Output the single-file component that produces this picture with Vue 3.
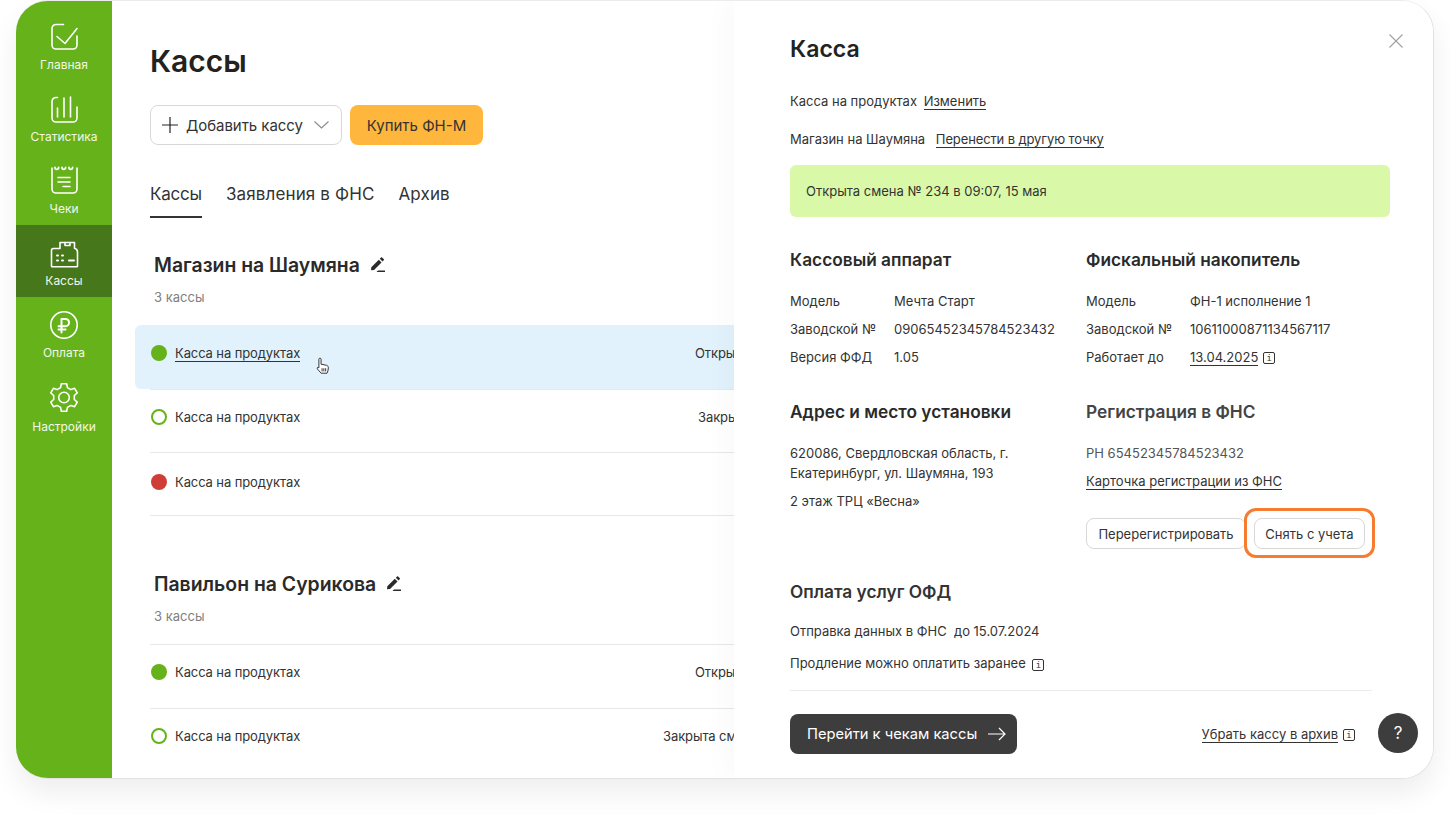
<script setup>
const navItems = [
  { id: 'home', label: 'Главная' },
  { id: 'stats', label: 'Статистика' },
  { id: 'receipts', label: 'Чеки' },
  { id: 'kkt', label: 'Кассы', active: true },
  { id: 'pay', label: 'Оплата' },
  { id: 'settings', label: 'Настройки' },
];

const groups = [
  {
    title: 'Магазин на Шаумяна',
    rows: [
      { state: 'open', status: 'Открыта смена', statusLeft: 560, hover: true },
      { state: 'closed', status: 'Закрыта смена', statusLeft: 548 },
      { state: 'error', status: '', statusLeft: 0 },
    ],
  },
  {
    title: 'Павильон на Сурикова',
    rows: [
      { state: 'open', status: 'Открыта смена', statusLeft: 545 },
      { state: 'closed', status: 'Закрыта смена в 18:00', statusLeft: 513 },
    ],
  },
];

const kkt = [
  ['Модель', 'Мечта Старт'],
  ['Заводской №', '09065452345784523432'],
  ['Версия ФФД', '1.05'],
];
const fn = [
  ['Модель', 'ФН-1 исполнение 1'],
  ['Заводской №', '10611000871134567117'],
];

// six tooth gear outline for the settings item
function gearPath() {
  const pt = (r, deg) => {
    const a = (deg * Math.PI) / 180;
    return (15 + r * Math.cos(a)).toFixed(2) + ' ' + (15.5 + r * Math.sin(a)).toFixed(2);
  };
  let d = '';
  for (let k = 0; k < 6; k++) {
    const c = k * 60 - 90;
    d += (k ? 'L' : 'M') + pt(10.5, c - 19) + 'L' + pt(14, c - 11) + 'L' + pt(14, c + 11) + 'L' + pt(10.5, c + 19);
  }
  return d + 'Z';
}
</script>

<template>
  <div class="page">
    <div class="frame">
      <nav class="sidebar">
        <a v-for="item in navItems" :key="item.id" class="nav-item" :class="{ active: item.active }">
          <svg class="nav-icon" viewBox="0 0 30 30" fill="none" stroke="#fff" stroke-width="1.6" stroke-linecap="round" stroke-linejoin="round">
            <template v-if="item.id === 'home'">
              <path d="M14.500 2.500H7a4 4 0 0 0-4 4V23a4 4 0 0 0 4 4h17a4 4 0 0 0 4-4v-9" />
              <path d="M8 14.500l8 7L28 6.500" />
            </template>
            <template v-else-if="item.id === 'stats'">
              <path d="M8.500 3.500H7a4 4 0 0 0-4 4V24a4 4 0 0 0 4 4h17a4 4 0 0 0 4-4V13" />
              <path d="M8.500 14v9M15 4v19M21.500 3v20" />
            </template>
            <template v-else-if="item.id === 'receipts'">
              <path d="M3 2v21a4 4 0 0 0 4 4h17a4 4 0 0 0 4-4V2" />
              <path d="M9 11.500h12M9 16h12M14 20.500h7" />
              <path d="M6 1.500a1.800 1.800 0 0 0 3.600 0M13 1.500a1.800 1.800 0 0 0 3.600 0M20 1.500a1.800 1.800 0 0 0 3.600 0" stroke-width="1.800" />
            </template>
            <template v-else-if="item.id === 'kkt'">
              <path d="M11 10.500H4.500a2 2 0 0 0-2 2V28a.8.8 0 0 0 .8.8h24.400a.8.8 0 0 0 .8-.8V14a4 4 0 0 0-3-3.800V4.500H11z" />
              <path d="M16 4.500v3h5v-3" />
              <path d="M8 17.500h1M13 17.500h1M8 22.500h1M13 22.500h1M20 22.500h5" stroke-width="2" />
            </template>
            <template v-else-if="item.id === 'pay'">
              <circle cx="15" cy="15" r="13.200" />
              <path d="M12.500 22.500V9h4a3.500 3.500 0 0 1 0 7.200H9.500M9.500 19.500h7" stroke-width="2" />
            </template>
            <template v-else>
              <circle cx="15" cy="15.500" r="5.300" />
              <path :d="gearPath()" />
            </template>
          </svg>
          <span>{{ item.label }}</span>
        </a>
      </nav>

      <main class="content">
        <h1>Кассы</h1>
        <div class="actions">
          <button class="btn-add">
            <svg width="16" height="16" viewBox="0 0 16 16" stroke="#222" stroke-width="1.2"><path d="M8 0v16M0 8h16" /></svg>
            <span>Добавить кассу</span>
            <svg class="chevron" width="15" height="8" viewBox="0 0 15 8" fill="none" stroke="#8a8a8a" stroke-width="1.1"><path d="M.5.5l7 6.500 7-6.500" /></svg>
          </button>
          <button class="btn-buy">Купить ФН-М</button>
        </div>
        <div class="tabs">
          <span class="tab current">Кассы</span>
          <span class="tab">Заявления в ФНС</span>
          <span class="tab">Архив</span>
        </div>

        <section v-for="group in groups" :key="group.title" class="group">
          <h2>
            {{ group.title }}
            <svg width="16" height="16" viewBox="0 0 16 16" fill="#2b2b2b"><path d="M1 13.200l.3-3L8.800 2.700l2.700 2.700L4 12.900zM9.800 1.700L11 .5a.8.8 0 0 1 1.100 0l1.600 1.600a.8.8 0 0 1 0 1.100l-1.200 1.200zM8 13.500h7V15H6.500z" /></svg>
          </h2>
          <div class="count">3 кассы</div>
          <div class="rows">
            <div v-for="(row, i) in group.rows" :key="i" class="row" :class="{ hover: row.hover }">
              <i class="dot" :class="row.state"></i>
              <span class="row-name" :class="{ link: row.hover }">Касса на продуктах</span>
              <span class="row-status" :style="{ left: row.statusLeft + 'px' }">{{ row.status }}</span>
              <svg v-if="row.hover" class="cursor" width="15" height="18" viewBox="0 0 16 20" fill="#fff" stroke="#222" stroke-width="1" stroke-linejoin="round">
                <path d="M4 12V2.500a1.200 1.200 0 0 1 2.400 0V8l6 1.200c1.500.4 2.100 1.300 2.100 2.800l-.5 3.500-1 2.500H6.500L2.500 13.500c-1-1.500.2-2.700 1.500-1.500z" />
                <path d="M7.500 12.500v3.500M9.500 12.500v3.500M11.500 12.500v3.500" fill="none" />
              </svg>
            </div>
          </div>
        </section>
      </main>

      <aside class="panel">
        <svg class="close" width="14" height="14" viewBox="0 0 14 14" stroke="#a0a0a0" stroke-width="1.100"><path d="M.5.500l13 13M13.500.500l-13 13" /></svg>
        <h2 class="panel-title">Касса</h2>
        <p class="line first">Касса на продуктах <a class="link">Изменить</a></p>
        <p class="line second">Магазин на Шаумяна <a class="link">Перенести в другую точку</a></p>
        <div class="shift">Открыта смена № 234 в 09:07, 15 мая</div>

        <div class="columns first-row">
          <div>
            <h3>Кассовый аппарат</h3>
            <dl class="props">
              <template v-for="p in kkt" :key="p[0]">
                <dt>{{ p[0] }}</dt>
                <dd>{{ p[1] }}</dd>
              </template>
            </dl>
          </div>
          <div>
            <h3>Фискальный накопитель</h3>
            <dl class="props">
              <template v-for="p in fn" :key="p[0]">
                <dt>{{ p[0] }}</dt>
                <dd>{{ p[1] }}</dd>
              </template>
              <dt>Работает до</dt>
              <dd><a class="link">13.04.2025</a><i class="info">i</i></dd>
            </dl>
          </div>
        </div>

        <div class="columns second-row">
          <div>
            <h3>Адрес и место установки</h3>
            <p class="address">620086, Свердловская область, г. Екатеринбург, ул. Шаумяна, 193</p>
            <p class="floor">2 этаж ТРЦ «Весна»</p>
          </div>
          <div>
            <h3 class="soft">Регистрация в ФНС</h3>
            <p class="reg">РН 65452345784523432</p>
            <p class="card-link"><a class="link">Карточка регистрации из ФНС</a></p>
            <div class="reg-actions">
              <button class="btn-small">Перерегистрировать</button>
              <button class="btn-small marked">Снять с учета</button>
            </div>
          </div>
        </div>

        <h3 class="ofd">Оплата услуг ОФД</h3>
        <p class="line ofd-date">Отправка данных в ФНС&nbsp; до 15.07.2024</p>
        <p class="line ofd-pay">Продление можно оплатить заранее <i class="info">i</i></p>

        <div class="panel-footer">
          <button class="btn-dark">
            Перейти к чекам кассы
            <svg width="18" height="14" viewBox="0 0 18 14" fill="none" stroke="#fff" stroke-width="1.200"><path d="M0 7h17M11 1l6 6-6 6" /></svg>
          </button>
          <span class="archive"><a class="link">Убрать кассу в архив</a><i class="info">i</i></span>
        </div>
        <button class="help">?</button>
      </aside>
    </div>
  </div>
</template>

<style scoped>
.page {
  height: 816px;
  padding-left: 16px;
  box-sizing: border-box;
  background: #fff;
  overflow: hidden;
}
.frame {
  position: relative;
  display: flex;
  box-sizing: border-box;
  width: 1418px;
  height: 779px;
  border: 1px solid #e2e2e2;
  border-top-color: #ececec;
  border-left: 0;
  border-radius: 32px;
  overflow: hidden;
  background: #fff;
  box-shadow: 0 14px 28px rgba(0, 0, 0, 0.07);
  font-family: Inter, "Noto Sans", sans-serif;
  color: #333;
}
.sidebar {
  flex: 0 0 96px;
  padding-top: 8px;
  background: #65b21a;
  color: #fff;
}
.nav-item {
  display: flex;
  flex-direction: column;
  align-items: center;
  height: 72px;
  padding-top: 13px;
  box-sizing: border-box;
  font-size: 12px;
  line-height: 16px;
  color: #f2f8ea;
}
.nav-item:last-child span {
  margin-top: 2px;
}
.nav-item.active {
  background: #47771b;
}
.nav-icon {
  width: 30px;
  height: 30px;
  margin-bottom: 5px;
  overflow: visible;
}
.content {
  flex: 1;
  padding: 0 0 0 38px;
}
h1 {
  margin: 40px 0 0;
  font-size: 30px;
  line-height: 40px;
  font-weight: 600;
  color: #222;
}
.actions {
  display: flex;
  gap: 8px;
  margin-top: 24px;
}
button {
  font-family: inherit;
}
.btn-add {
  display: flex;
  align-items: center;
  width: 192px;
  height: 40px;
  padding: 0 12px 0 11px;
  border: 1px solid #d8d8d8;
  border-radius: 8px;
  background: #fff;
  color: #333;
  font-size: 15px;
}
.btn-add span {
  margin-left: 8px;
  letter-spacing: -0.05px;
}
.chevron {
  margin-left: auto;
}
.btn-buy {
  width: 133px;
  height: 40px;
  border: 0;
  border-radius: 8px;
  background: #ffb63d;
  color: #333;
  font-size: 15px;
}
.tabs {
  display: flex;
  gap: 24px;
  margin-top: 38px;
  font-size: 17px;
  line-height: 22px;
}
.tab {
  padding-bottom: 11px;
  border-bottom: 2px solid transparent;
  letter-spacing: 0.13px;
}
.tab.current {
  border-bottom-color: #333;
  letter-spacing: -0.2px;
}
.group h2 {
  display: flex;
  align-items: center;
  gap: 10px;
  margin: 0 0 0 4px;
  font-size: 19.400px;
  line-height: 24px;
  font-weight: 600;
  color: #2a2a2a;
}
.tabs + .group {
  margin-top: 35px;
}
.group + .group {
  margin-top: 56px;
}
.count {
  margin: 12px 0 0 4px;
  font-size: 13px;
  line-height: 16px;
  color: #808080;
}
.rows {
  margin-top: 19px;
  border-top: 1px solid #e8e8e8;
}
.group + .group .rows {
  margin-top: 20px;
}
.group:first-of-type .rows {
  border-top-color: transparent;
}
.row {
  position: relative;
  display: flex;
  gap: 8px;
  height: 64px;
  padding-top: 20px;
  border-bottom: 1px solid #e8e8e8;
  box-sizing: border-box;
  font-size: 13px;
  line-height: 16px;
  letter-spacing: -0.1px;
}
.group + .group .row {
  padding-top: 19px;
}
.group + .group .row:last-child {
  border-bottom: 0;
}
.row:nth-child(3) {
  height: 63px;
  padding-top: 21px;
}
.row.hover {
  margin-left: -15px;
  padding-left: 15px;
  border-bottom: 0;
  background: #e1f2fd;
  border-radius: 6px 0 0 6px;
}
.row.hover::after {
  content: '';
  position: absolute;
  left: 15px;
  right: 0;
  bottom: -1px;
  height: 1px;
  background: #e8e8e8;
}
.dot {
  flex: 0 0 16px;
  height: 16px;
  margin-left: 1px;
  border-radius: 50%;
  box-sizing: border-box;
}
.dot.open {
  background: #65b21a;
}
.dot.closed {
  border: 2px solid #65b21a;
}
.dot.error {
  background: #ce3e37;
}
.row-name {
  height: 16px;
}
.row-status {
  position: absolute;
  white-space: nowrap;
}
.cursor {
  position: absolute;
  left: 180px;
  top: 32px;
}
.link {
  border-bottom: 1px solid #333;
  color: #333;
}
.panel {
  position: absolute;
  top: 0;
  left: 718px;
  width: 700px;
  height: 100%;
  padding-left: 56px;
  box-sizing: border-box;
  background: #fff;
  box-shadow: -10px 0 24px rgba(0, 0, 0, 0.025);
  font-size: 13px;
  line-height: 18px;
}
.close {
  position: absolute;
  left: 655px;
  top: 33px;
}
.panel-title {
  margin: 0;
  padding-top: 32px;
  font-size: 23px;
  line-height: 32px;
  font-weight: 600;
  color: #222;
}
p {
  margin: 0;
}
.line.first .link {
  margin-left: 3px;
}
.line.second .link {
  margin-left: 7px;
  letter-spacing: -0.12px;
}
.line.first {
  margin-top: 27px;
}
.line.second {
  margin-top: 20px;
}
.shift {
  display: flex;
  align-items: center;
  width: 600px;
  height: 52px;
  margin-top: 17px;
  padding-left: 16px;
  box-sizing: border-box;
  border-radius: 6px;
  background: #d9f9a9;
}
.columns {
  display: grid;
  grid-template-columns: 296px 1fr;
}
.columns.first-row {
  margin-top: 31px;
}
.columns.second-row {
  margin-top: 29px;
}
h3 {
  margin: 0;
  font-size: 17.300px;
  line-height: 24px;
  font-weight: 600;
  color: #2a2a2a;
}
h3.soft {
  color: #444;
}
.props {
  display: grid;
  grid-template-columns: 104px 1fr;
  grid-auto-rows: 28px;
  margin: 15px 0 0;
  align-items: center;
}
dd {
  margin: 0;
}
.info {
  display: inline-block;
  width: 10px;
  height: 10px;
  margin-left: 5px;
  border: 1px solid #333;
  border-radius: 2px;
  font: 9px/10px "DejaVu Sans Mono", monospace;
  text-align: center;
  vertical-align: 1px;
}
.ofd-pay .info {
  margin-left: 3px;
  vertical-align: 0;
}
.address {
  width: 260px;
  margin-top: 19px;
  line-height: 20px;
}
.floor {
  margin-top: 9px;
}
.reg {
  margin-top: 19px;
  line-height: 20px;
  color: #555;
}
.card-link {
  margin-top: 8px;
  line-height: 20px;
}
.reg-actions {
  display: flex;
  gap: 8px;
  margin-top: 27px;
}
.btn-small {
  position: relative;
  width: 160px;
  height: 31px;
  padding: 0;
  border: 1px solid #d8d8d8;
  border-radius: 8px;
  background: #fff;
  color: #333;
  font-size: 13px;
}
.btn-small.marked {
  width: 111px;
}
.btn-small.marked::after {
  content: '';
  position: absolute;
  inset: -11px -11px -10px -11px;
  border: 3px solid #f67c31;
  border-radius: 12px;
}
.ofd {
  margin-top: 31px;
  color: #333;
}
.ofd-date {
  margin-top: 18px;
}
.ofd-pay {
  margin-top: 14px;
}
.panel-footer {
  display: flex;
  align-items: center;
  justify-content: space-between;
  width: 565px;
  margin-top: 18px;
  padding: 23px 17px 0 0;
  border-top: 1px solid #ececec;
}
.btn-dark {
  display: flex;
  align-items: center;
  justify-content: space-between;
  width: 227px;
  height: 40px;
  padding: 0 11px 0 17px;
  border: 0;
  border-radius: 8px;
  background: #3d3d3d;
  color: #fff;
  font-size: 14.700px;
  white-space: nowrap;
}
.help {
  position: absolute;
  left: 644px;
  top: 712px;
  width: 40px;
  height: 40px;
  border: 0;
  border-radius: 50%;
  background: #3d3d3d;
  color: #fff;
  font-size: 17px;
}
</style>
